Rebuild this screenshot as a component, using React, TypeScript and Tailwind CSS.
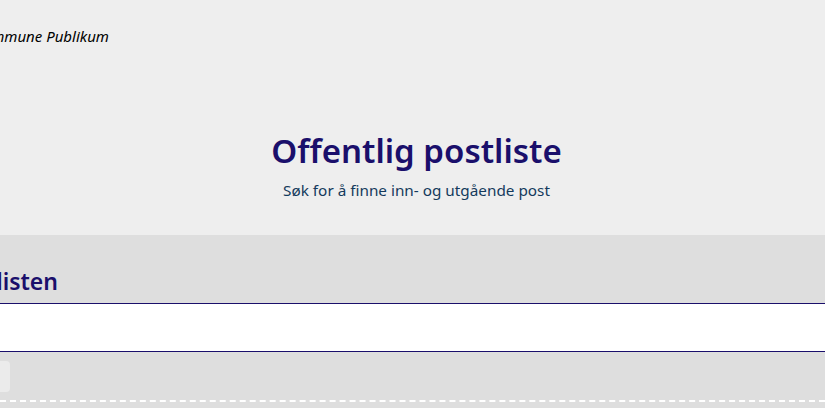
export default function App() {
  return (
    <div className="h-[408px] w-[825px] overflow-hidden bg-[#dedede] font-['Noto_Sans',sans-serif]">
      {/* Header */}
      <header className="flex h-[235px] flex-col bg-[#eeeeee]">
        <div className="flex h-[73px] w-[109px] items-center justify-end">
          <span className="whitespace-nowrap text-[15px] italic text-black">Kommune Publikum</span>
        </div>
        <div className="mt-[56px] flex flex-col items-center pl-[8px]">
          <h1 className="text-[33px] font-semibold leading-[44px] text-[#1a0f6b]">Offentlig postliste</h1>
          <p className="mt-[7px] text-[15.3px] leading-[20px] text-[#143a5c]">Søk for å finne inn- og utgående post</p>
        </div>
      </header>

      {/* Search */}
      <section className="pt-[30px]">
        <div className="flex h-[38px] w-[58px] items-start justify-end">
          <h2 className="whitespace-nowrap text-[23px] font-semibold leading-[32px] text-[#1a0f6b]">Søk i postlisten</h2>
        </div>
        <input
          type="text"
          className="block h-[49px] w-full border-y border-[#1a0f6b] bg-white px-3 outline-none"
        />
        <div className="flex h-[48px] items-center">
          <div className="h-[31px] w-[10px] rounded-r-[4px] bg-[#ebebeb]"></div>
        </div>
        <div className="border-t-2 border-dashed border-white"></div>
      </section>
    </div>
  );
}
